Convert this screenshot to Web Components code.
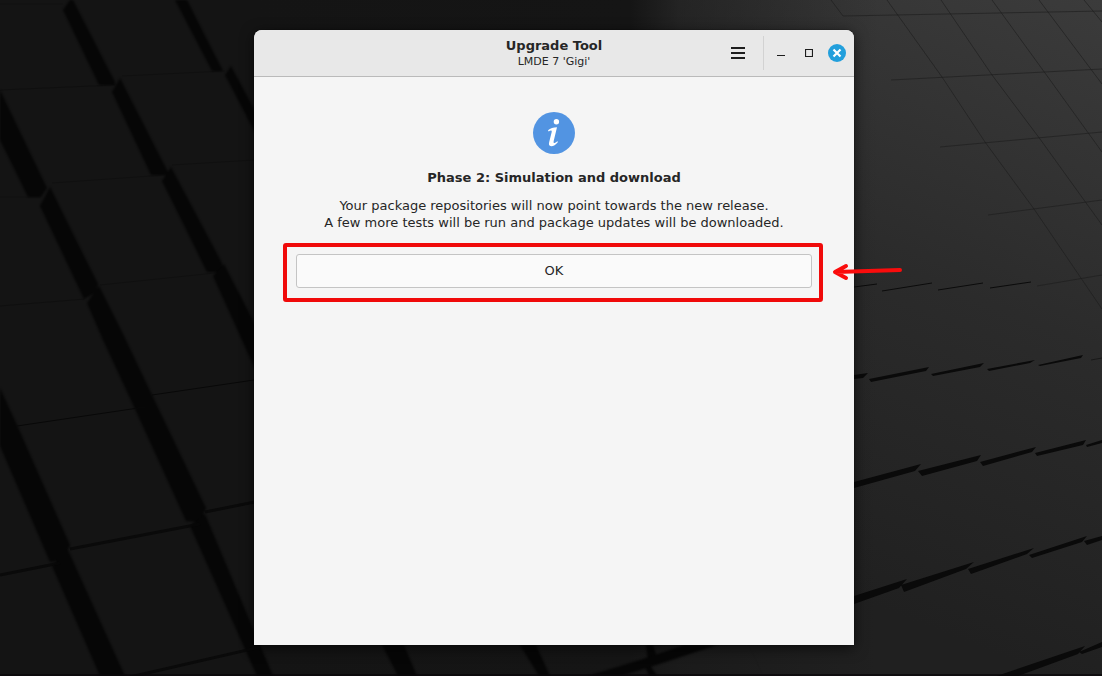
<!DOCTYPE html>
<html lang="en">
<head>
<meta charset="utf-8">
<title>Upgrade Tool</title>
<style>
html, body { margin: 0; height: 100%; background: #161616; }
body { font-family: "DejaVu Sans", sans-serif; color: #262626; }
</style>
</head>
<body>
<desktop-screen>
  <app-window>
    <title-bar slot="header">
      <span slot="title">Upgrade Tool</span>
      <span slot="subtitle">LMDE 7 'Gigi'</span>
    </title-bar>
    <info-page>
      <span slot="heading">Phase 2: Simulation and download</span>
      <span slot="text">Your package repositories will now point towards the new release.<br>A few more tests will be run and package updates will be downloaded.</span>
      <marked-area slot="action"><push-button>OK</push-button></marked-area>
    </info-page>
  </app-window>
</desktop-screen>
<script>
function define(name, html) {
  const template = document.createElement('template');
  template.innerHTML = html;
  customElements.define(name, class extends HTMLElement {
    constructor() {
      super();
      this.attachShadow({ mode: 'open' }).appendChild(template.content.cloneNode(true));
    }
  });
}

define('desktop-wallpaper', `
<style>
:host { display: block; position: absolute; inset: 0; overflow: hidden; }
svg { display: block; width: 100%; height: 100%; }
</style>
<svg viewBox="0 0 1102 676" preserveAspectRatio="xMidYMid slice" aria-hidden="true">
  <defs>
    <linearGradient id="right" x1="1102" y1="0" x2="860" y2="600" gradientUnits="userSpaceOnUse">
      <stop offset="0" stop-color="#3b3b3b"/><stop offset=".5" stop-color="#2b2b2b"/><stop offset="1" stop-color="#202020"/>
    </linearGradient>
    <linearGradient id="edge" x1="630" y1="0" x2="880" y2="0" gradientUnits="userSpaceOnUse">
      <stop offset="0" stop-color="#151515"/><stop offset=".2" stop-color="#151515" stop-opacity=".5"/><stop offset="1" stop-color="#151515" stop-opacity="0"/>
    </linearGradient>
    <linearGradient id="left" x1="250" y1="0" x2="630" y2="0" gradientUnits="userSpaceOnUse">
      <stop offset="0" stop-color="#141414"/><stop offset="1" stop-color="#151515"/>
    </linearGradient>
    <filter id="soft" x="-5%" y="-5%" width="110%" height="110%" color-interpolation-filters="sRGB"><feGaussianBlur stdDeviation="1"/></filter>
  </defs>
  <rect width="1102" height="676" fill="url(#left)"/>
  <rect x="630" width="472" height="676" fill="url(#right)"/>
  <rect x="630" width="250" height="676" fill="url(#edge)"/>
  <g fill="#060606" filter="url(#soft)">
    <path d="M63 10L70 0H73L115 82V85H99Z"/>
    <path d="M112 92L120 78L168 172V175H151Z"/>
    <path d="M162 181L171 167L222 263V272H207Z"/>
    <path d="M213 276L224 264L260 334V380Z"/>
    <path d="M175 0H187L223 71H212Z"/>
    <path d="M225 75L231 66L260 120V142Z"/>
    <path d="M0 90L47 188L41 197H28L0 140Z"/>
    <path d="M40 206L50 187L98 284L96 292L84 299Z"/>
    <path d="M87 303L99 286L124 336L152 395L206 508L200 522L186 521L135 409L103 340Z"/>
    <path d="M190 526L205 514L273 676H257Z"/>
    <path d="M0 388L17 425L70 545L63 560L50 562L0 446Z"/>
    <path d="M52 566L68 550L125 676H100Z"/>
    <path d="M382 645H404L417 676H398Z"/>
    <path d="M520 645H536L550 676H539Z"/>
    <path d="M646 645H653L657 657L648 661ZM645 667L650 665L657 676H649Z"/>
    <path d="M588 676L640 660L684 645H717L650 667L620 676Z"/>
  </g>
  <g fill="none" stroke="#080808">
    <path d="M17 426L145 407M152 395L254 380"/>
    <path d="M70 549L200 524M205 512L260 501M0 575L60 563M130 677L260 647" stroke-width="3" stroke-opacity=".8"/>
    <path d="M0 4H63M0 90L115 85M122 76L225 71M52 183L165 175M172 165L254 160M0 197H40M100 285L215 273M0 306L85 299" stroke-opacity=".3"/>
  </g>
  <g fill="none" stroke="#1c1c1c" stroke-opacity=".6">
    <path d="M831 0L843 16L1102 11M891 80L1102 69M940 147L1102 132M988 215L1102 200M1037 286L1102 275"/>
    <path d="M887 0L942 77L985 142L1034 209L1102 309M941 0L992 75L1040 139L1102 225M992 0L1045 73L1102 152M1039 0L1102 84M1084 0L1102 22"/>
    <path d="M749 645L763 676"/>
  </g>
  <path d="M854 287L877 284M882 291L932 283M938 290L983 283M990 288L1031 282" fill="none" stroke="#0b0b0b"/>
  <g fill="#0a0a0a">
    <path d="M854 375L868 373L863 378L854 379ZM869 379L929 367L926 371L871 382ZM931 374L984 363L980 367L933 376ZM987 369L1035 360L1030 363L989 371ZM1038 365L1083 355L1081 358L1040 366Z"/>
    <path d="M854 482L921 464L915 471L854 488ZM918 471L981 455L977 461L922 476ZM980 462L1036 447L1032 452L983 466ZM1035 453L1086 440L1083 445L1037 456ZM1086 445L1102 440V443L1087 447Z"/>
    <path d="M854 596L907 579L899 588L854 604ZM901 585L974 562L966 569L904 592ZM968 569L1034 548L1027 554L971 574ZM1029 555L1087 536L1082 542L1032 558ZM1084 541L1102 536V540L1087 545Z"/>
    <path d="M985 680L1020 668L1085 646L1078 654L1018 676ZM1079 652L1102 642V647L1082 654Z"/>
  </g>
  <path d="M1091 360L1102 358" stroke="#191919"/>
  <rect y="674" width="1102" height="2" fill="#090608" opacity=".7"/>
</svg>`);

define('desktop-screen', `
<style>
:host { display: block; position: relative; min-height: 100%; }
main { position: relative; box-sizing: border-box; min-height: 100vh; display: flex; justify-content: center; padding: 30px 0 31px 6px; }
</style>
<desktop-wallpaper></desktop-wallpaper>
<main><slot></slot></main>`);

define('app-window', `
<style>
:host { display: flex; flex-direction: column; width: 100%; max-width: 600px; background: #f5f5f5; border-radius: 8px 8px 0 0; box-shadow: 0 3px 14px rgba(0,0,0,.6), 0 0 1px #000; }
.body { flex: 1; }
</style>
<slot name="header"></slot>
<div class="body"><slot></slot></div>`);

define('title-bar', `
<style>
:host { display: block; }
header { display: grid; grid-template-columns: 1fr auto 1fr; align-items: center; height: 46px; background: #e8e8e8; border-bottom: 1px solid #bababa; border-radius: 8px 8px 0 0; }
.titles { grid-column: 2; text-align: center; padding-top: 2px; }
h1 { margin: 0; font-size: 13px; line-height: 16px; }
p { margin: 0; font-size: 11px; line-height: 16px; }
.controls { display: flex; align-items: center; justify-content: flex-end; padding-right: 7px; }
button { display: block; padding: 0; border: 0; background: none; width: 28px; height: 28px; }
svg { display: block; margin: auto; }
.menu { margin-right: 11px; }
.rule { width: 1px; height: 34px; background: #d2d2d2; margin-right: 3px; }
.close { width: 20px; margin-left: 4px; }
</style>
<header>
  <div class="titles"><h1><slot name="title"></slot></h1><p><slot name="subtitle"></slot></p></div>
  <div class="controls">
    <button class="menu" aria-label="Menu"><svg width="14" height="14"><path d="M0 2H14M0 7H14M0 12H14" stroke="#1d1d1d" stroke-width="2"/></svg></button>
    <span class="rule"></span>
    <button aria-label="Minimize"><svg width="8" height="8"><path d="M0 6.500H8" stroke="#1d1d1d"/></svg></button>
    <button aria-label="Maximize"><svg width="8" height="8"><path d="M.5.5H7.500V7.500H.5Z" fill="none" stroke="#1d1d1d" stroke-width="1.200"/></svg></button>
    <button class="close" aria-label="Close"><svg width="18" height="18"><circle cx="9" cy="9" r="9" fill="#229fdc"/><path d="M5.500 5.500L12.500 12.500M12.500 5.500L5.500 12.500" stroke="#fff" stroke-width="2.200"/></svg></button>
  </div>
</header>`);

define('info-page', `
<style>
:host { display: block; padding: 35px 29px 0; text-align: center; }
svg { display: block; margin: 0 auto 14px; }
h2 { margin: 0 0 9px; font-size: 13px; line-height: 20px; }
p { margin: 0 0 12px; font-size: 13px; line-height: 17px; }
</style>
<svg width="42" height="42" viewBox="0 0 42 42" aria-hidden="true">
  <circle cx="21" cy="21" r="21" fill="#5294e2"/>
  <circle cx="23.400" cy="9.700" r="2.700" fill="#fff"/>
  <path d="M15 18.300C17.200 16.300 20.500 15.300 24 15.300L20.700 29C20.400 30.800 20.800 31.300 21.600 31C22.700 30.600 23.500 29.800 24.300 29.200L25 30C22.800 32.800 20.500 34.200 18.200 34.200C16 34.200 15.600 32.200 16.200 30L18.700 20C19 18.200 18 17.900 15.600 19.400Z" fill="#fff"/>
</svg>
<h2><slot name="heading"></slot></h2>
<p><slot name="text"></slot></p>
<slot name="action"></slot>`);

define('marked-area', `
<style>
:host { display: block; position: relative; border: 4px solid #f00a0a; border-radius: 3px; padding: 7px 7px 10px 9px; margin-right: 2px; }
svg { position: absolute; left: calc(100% + 13px); top: 14px; }
</style>
<slot></slot>
<svg width="74" height="22" aria-hidden="true"><path d="M68 9L4 11M14 5L3 11L14 17" fill="none" stroke="#fa0c0c" stroke-width="4" stroke-linecap="round" stroke-linejoin="round"/></svg>`);

define('push-button', `
<style>
:host { display: block; }
button { display: block; width: 100%; padding: 8px; border: 1px solid #c4c4c4; border-radius: 3px; background: #fafafa; color: inherit; font-family: inherit; font-size: 13px; line-height: 16px; }
</style>
<button type="button"><slot></slot></button>`);
</script>
</body>
</html>
